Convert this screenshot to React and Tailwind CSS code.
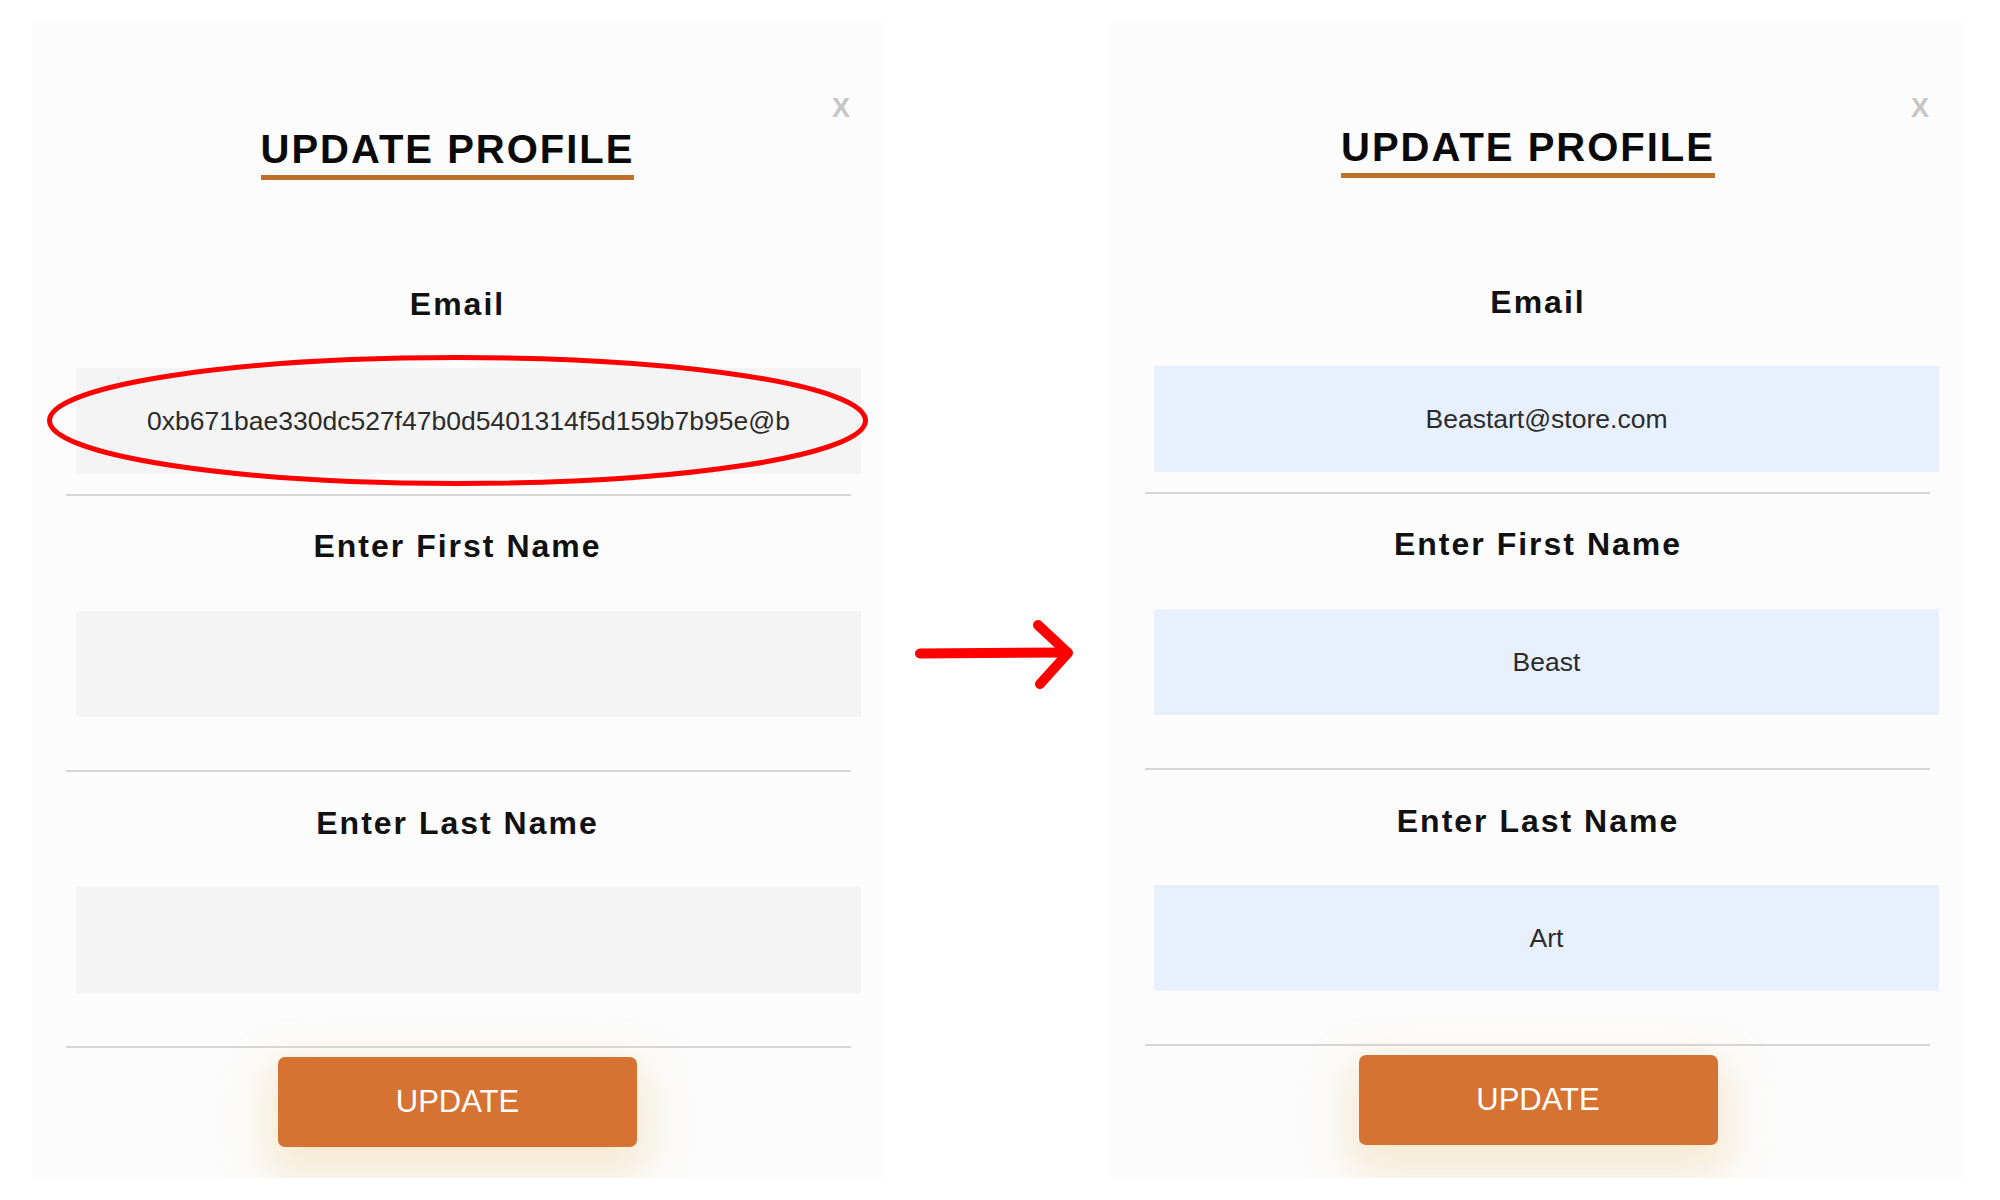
import React from "react";

const FONT = "font-['Liberation_Sans',Arial,Helvetica,sans-serif]";

function Field({ value, filled, boxMl, children }) {
  return (
    <div
      className={`relative h-[106px] w-[785px] ${boxMl} ${
        filled ? "bg-[#e8f0fe]" : "bg-[#f4f4f4]"
      }`}
    >
      <input
        readOnly
        value={value}
        className={`h-full w-full border-0 bg-transparent text-center text-[26.5px] leading-[106px] text-[#2b2b2b] outline-none ${FONT}`}
      />
      {children}
    </div>
  );
}

function Label({ text, mt }) {
  return (
    <div
      className={`${mt} text-center text-[32px] leading-[32px] font-bold tracking-[2px] text-[#111111]`}
    >
      {text}
    </div>
  );
}

function Divider({ mt, ml }) {
  return <div className={`${mt} ${ml} h-[2px] w-[785px] bg-[#d6d6d6]`} />;
}

function Panel({ filled, titleMt, boxMl, divMl, xLeft, width }) {
  const email = filled
    ? "Beastart@store.com"
    : "0xb671bae330dc527f47b0d5401314f5d159b7b95e@b";
  return (
    <div
      className={`relative flex h-[1156px] ${width} shrink-0 flex-col overflow-hidden bg-[#fcfcfc] ${FONT}`}
    >
      <span
        className={`absolute ${xLeft} top-[73px] text-[27px] leading-[27px] font-bold text-[#c6c6c6]`}
      >
        X
      </span>

      <div className={`${titleMt} flex justify-center pr-[20px]`}>
        <h1 className="inline-block border-b-[5px] border-[#bf6f2a] pb-[6px] text-[40px] leading-[40px] font-bold tracking-[2px] text-[#0a0a0a]">
          UPDATE PROFILE
        </h1>
      </div>

      <Label text="Email" mt="mt-[108px]" />
      <div className="mt-[48px]">
        <Field value={email} filled={filled} boxMl={boxMl}>
          {!filled && (
            <svg
              className="pointer-events-none absolute left-[-32px] top-[-16px]"
              width="828"
              height="137"
              viewBox="0 0 828 137"
            >
              <ellipse
                cx="413.5"
                cy="68.5"
                rx="408"
                ry="63"
                fill="none"
                stroke="#ff0000"
                strokeWidth="5"
              />
            </svg>
          )}
        </Field>
      </div>
      <Divider mt="mt-[20px]" ml={divMl} />

      <Label text="Enter First Name" mt="mt-[34px]" />
      <div className="mt-[49px]">
        <Field value={filled ? "Beast" : ""} filled={filled} boxMl={boxMl} />
      </div>
      <Divider mt="mt-[53px]" ml={divMl} />

      <Label text="Enter Last Name" mt="mt-[35px]" />
      <div className="mt-[48px]">
        <Field value={filled ? "Art" : ""} filled={filled} boxMl={boxMl} />
      </div>
      <Divider mt="mt-[53px]" ml={divMl} />

      <button
        className={`mt-[9px] h-[90px] w-[359px] self-center rounded-[7px] bg-[#d67333] text-[31px] leading-[90px] text-white shadow-[0_18px_44px_10px_rgba(235,205,145,0.4)] ${FONT}`}
      >
        UPDATE
      </button>
    </div>
  );
}

export default function App() {
  return (
    <div className="flex min-h-[1200px] w-[2000px] bg-white pl-[32px] pt-[22px]">
      <Panel
        filled={false}
        titleMt="mt-[107px]"
        boxMl="ml-[44px]"
        divMl="ml-[34px]"
        xLeft="left-[800px]"
        width="w-[851px]"
      />
      <div className="w-[228px] shrink-0 pl-[27px] pt-[591px]">
        <svg width="170" height="82" viewBox="0 0 170 82">
          <path
            d="M10 40.5 L157 39.5"
            fill="none"
            stroke="#ff0000"
            strokeWidth="10"
            strokeLinecap="round"
          />
          <path
            d="M128 12 L158 40 L130 71"
            fill="none"
            stroke="#ff0000"
            strokeWidth="10"
            strokeLinecap="round"
            strokeLinejoin="round"
          />
        </svg>
      </div>
      <Panel
        filled={true}
        titleMt="mt-[105px]"
        boxMl="ml-[43px]"
        divMl="ml-[34px]"
        xLeft="left-[800px]"
        width="w-[854px]"
      />
    </div>
  );
}
